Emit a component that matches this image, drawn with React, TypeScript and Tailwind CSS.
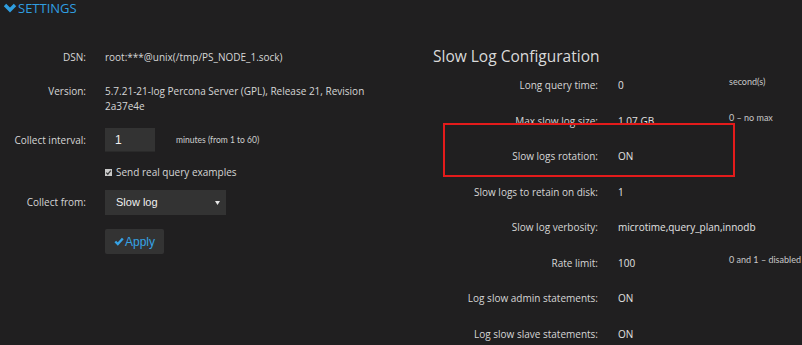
export default function App() {
  const rows = [
    { label: "Long query time:", value: "0", note: "second(s)" },
    { label: "Max slow log size:", value: "1.07 GB", note: "0 – no max" },
    { label: "Slow logs rotation:", value: "ON" },
    { label: "Slow logs to retain on disk:", value: "1" },
    { label: "Slow log verbosity:", value: "microtime,query_plan,innodb" },
    { label: "Rate limit:", value: "100", note: "0 and 1 – disabled" },
    { label: "Log slow admin statements:", value: "ON" },
    { label: "Log slow slave statements:", value: "ON" },
  ]

  return (
    <div
      className="relative w-[802px] h-[345px] overflow-hidden bg-[#201f20] text-[10px] text-[#d6d6d6]"
      style={{ fontFamily: '"Open Sans", "Noto Sans", sans-serif' }}
    >
      {/* header */}
      <div className="flex items-center h-[20px] pl-[3px] text-[#2f9ee0] text-[13px] leading-[18px] pb-[4px]">
        <svg width="14" height="10" viewBox="0 0 14 10" className="mr-[1px]">
          <polyline points="2,2 7,7 12,2" fill="none" stroke="#2f9ee0" strokeWidth="3.4" />
        </svg>
        <span>SETTINGS</span>
      </div>

      <div className="flex">
        {/* left column */}
        <div className="w-[433px] shrink-0">
          <div className="flex mt-[28px] leading-[18px]">
            <div className="w-[86px] text-right shrink-0">DSN:</div>
            <div className="ml-[19px]">root:***@unix(/tmp/PS_NODE_1.sock)</div>
          </div>
          <div className="flex mt-[18px] leading-[15px]">
            <div className="w-[86px] text-right shrink-0">Version:</div>
            <div className="ml-[19px] w-[275px]">5.7.21-21-log Percona Server (GPL), Release 21, Revision 2a37e4e</div>
          </div>
          <div className="flex items-center mt-[14px]">
            <div className="w-[86px] text-right shrink-0 whitespace-nowrap">Collect interval:</div>
            <div
              className="ml-[19px] w-[50px] h-[24px] bg-[#333333] flex items-center pl-[10px] text-[#f0f0f0] text-[12px] border-b border-[#2a2a2a]"
              style={{ fontFamily: '"Liberation Sans", Arial, sans-serif' }}
            >
              1
            </div>
            <div className="ml-[21px] text-[8.5px] text-[#cfcfcf]" style={{ fontFamily: 'Lato, sans-serif' }}>
              minutes (from 1 to 60)
            </div>
          </div>
          <div className="flex items-center mt-[11px] h-[18px] pl-[105px]">
            <svg width="7" height="7" viewBox="0 0 7 7" className="mr-[4px]">
              <rect width="7" height="7" fill="#c9c9c9" />
              <polyline points="1.2,3.6 2.8,5.2 5.8,1.6" fill="none" stroke="#3a3a3a" strokeWidth="1.3" />
            </svg>
            <span>Send real query examples</span>
          </div>
          <div className="flex items-center mt-[9px]">
            <div className="w-[86px] text-right shrink-0">Collect from:</div>
            <div
              className="ml-[19px] w-[121px] h-[25px] bg-[#333333] flex items-center justify-between pl-[11px] pr-[6px] text-[#f0f0f0] text-[11px]"
              style={{ fontFamily: '"Liberation Sans", Arial, sans-serif' }}
            >
              <span>Slow log</span>
              <svg width="5" height="4" viewBox="0 0 5 4">
                <polygon points="0,0 5,0 2.5,4" fill="#e6e6e6" />
              </svg>
            </div>
          </div>
          <div className="mt-[14px] pl-[105px]">
            <button
              className="w-[59px] h-[25px] bg-[#333333] rounded-[2px] flex items-center justify-center text-[#36a3e6] text-[12px]"
              style={{ fontFamily: '"Liberation Sans", Arial, sans-serif' }}
            >
              <svg width="10" height="9" viewBox="0 0 10 9" className="mr-[1px]">
                <polyline points="1.3,4.5 3.8,7 8.8,1.5" fill="none" stroke="#36a3e6" strokeWidth="2.4" />
              </svg>
              Apply
            </button>
          </div>
        </div>

        {/* right column */}
        <div className="flex-1">
          <div className="mt-[24px] h-[24px] leading-[24px] text-[15.5px] text-[#dadada]">Slow Log Configuration</div>
          {rows.map((r) => (
            <div key={r.label} className="flex items-center h-[35.5px]">
              <div className="w-[165px] text-right shrink-0 whitespace-nowrap">{r.label}</div>
              <div className="ml-[20px] w-[111px] shrink-0 whitespace-nowrap text-[#e2e2e2]">{r.value}</div>
              {r.note && (
                <div
                  className="text-[9px] text-[#c8c8c8] -translate-y-[4px] whitespace-nowrap"
                  style={{ fontFamily: 'Lato, sans-serif' }}
                >
                  {r.note}
                </div>
              )}
            </div>
          ))}
        </div>
      </div>

      {/* highlight annotation */}
      <div className="absolute left-[443px] top-[123px] w-[292px] h-[54px] border-2 border-[#e31b1b]" />
    </div>
  )
}
